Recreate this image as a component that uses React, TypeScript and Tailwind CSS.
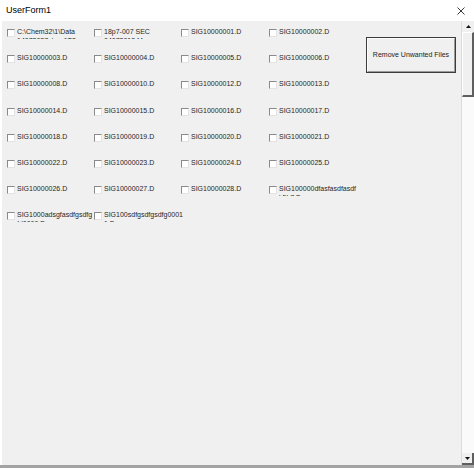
import React from 'react';

type Item = { lines: string[] };

const items: Item[] = [
  { lines: ['C:\\Chem32\\1\\Data', '14072037_\\nn 1T8'] },
  { lines: ['18p7-007 SEC', '04072018 M'] },
  { lines: ['SIG10000001.D'] },
  { lines: ['SIG10000002.D'] },
  { lines: ['SIG10000003.D'] },
  { lines: ['SIG10000004.D'] },
  { lines: ['SIG10000005.D'] },
  { lines: ['SIG10000006.D'] },
  { lines: ['SIG10000008.D'] },
  { lines: ['SIG10000010.D'] },
  { lines: ['SIG10000012.D'] },
  { lines: ['SIG10000013.D'] },
  { lines: ['SIG10000014.D'] },
  { lines: ['SIG10000015.D'] },
  { lines: ['SIG10000016.D'] },
  { lines: ['SIG10000017.D'] },
  { lines: ['SIG10000018.D'] },
  { lines: ['SIG10000019.D'] },
  { lines: ['SIG10000020.D'] },
  { lines: ['SIG10000021.D'] },
  { lines: ['SIG10000022.D'] },
  { lines: ['SIG10000023.D'] },
  { lines: ['SIG10000024.D'] },
  { lines: ['SIG10000025.D'] },
  { lines: ['SIG10000026.D'] },
  { lines: ['SIG10000027.D'] },
  { lines: ['SIG10000028.D'] },
  { lines: ['SIG100000dfasfasdfasdf', 'k5h7.D'] },
  { lines: ['SIG1000adsgfasdfgsdfg', 'fd0000.D'] },
  { lines: ['SIG100sdfgsdfgsdfg0001', '1.D'] },
];

function CheckItem({ item }: { item: Item }) {
  return (
    <div className="flex items-start h-[12px]">
      {/* classic sunken checkbox */}
      <div className="mt-[2px] w-[8px] h-[8px] shrink-0 bg-white border-t border-l border-[#8a8a8a] border-r-[#e3e3e3] border-b-[#e3e3e3] border-r border-b" />
      <div className="ml-[2px] w-[84px] shrink-0 h-[12px] overflow-hidden text-[7px] leading-[9px] text-[#262626]">
        {item.lines.map((l, i) => (
          <div key={i} className="whitespace-nowrap">{l}</div>
        ))}
      </div>
    </div>
  );
}

export default function App() {
  return (
    <div className="w-[474px] h-[468px] bg-white flex flex-col overflow-hidden font-['Liberation_Sans',Arial,sans-serif]">
      {/* Title bar */}
      <div className="h-[21px] flex items-center justify-between pl-[6px] pr-[9px] bg-white">
        <span className="text-[9px] text-black">UserForm1</span>
        <svg width="8" height="8" viewBox="0 0 8 8" className="text-[#222]">
          <path d="M0.5 0.5 L7.5 7.5 M7.5 0.5 L0.5 7.5" stroke="currentColor" strokeWidth="0.9" fill="none" />
        </svg>
      </div>

      {/* Form body */}
      <div className="flex-1 flex min-h-0">
        <div className="w-[2px] bg-white" />
        <div className="flex-1 bg-[#f0f0f0] flex items-start pl-[5px] pt-[6px]">
          <div className="grid grid-cols-[87px_87px_88px_87px] auto-rows-[12px] gap-y-[14.2px]">
            {items.map((it, i) => (
              <CheckItem key={i} item={it} />
            ))}
          </div>
          <div className="ml-[10px] mt-[10px] w-[90px] h-[36px] border border-[#3c3c3c] flex">
            <div className="flex-1 border border-[#fdfdfd] border-r-[#9a9a9a] border-b-[#9a9a9a] bg-[#f0f0f0] flex items-center justify-center">
              <span className="text-[7px] text-[#1c1c1c] whitespace-nowrap">Remove Unwanted Files</span>
            </div>
          </div>
        </div>

        {/* Scrollbar */}
        <div className="w-[13px] flex flex-col bg-[#f7f7f7] border-l border-[#dcdcdc]">
          <div className="h-[11px] bg-[#f0f0f0] flex items-center justify-center">
            <svg width="5" height="3" viewBox="0 0 5 3">
              <path d="M0 3 L2.5 0 L5 3 Z" fill="#111" />
            </svg>
          </div>
          <div className="h-[65px] bg-[#f0f0f0] border-t border-l border-white border-r-2 border-b-2 border-r-[#5f5f5f] border-b-[#5f5f5f]" />
          <div className="flex-1 bg-[#fafafa]" />
          <div className="h-[12px] bg-[#f0f0f0] border-r-2 border-b-2 border-[#5f5f5f] flex items-center justify-center">
            <svg width="5" height="3" viewBox="0 0 5 3">
              <path d="M0 0 L5 0 L2.5 3 Z" fill="#111" />
            </svg>
          </div>
        </div>
      </div>

      {/* Bottom edge */}
      <div className="h-[3px] bg-[#a3a3a3]" />
    </div>
  );
}
